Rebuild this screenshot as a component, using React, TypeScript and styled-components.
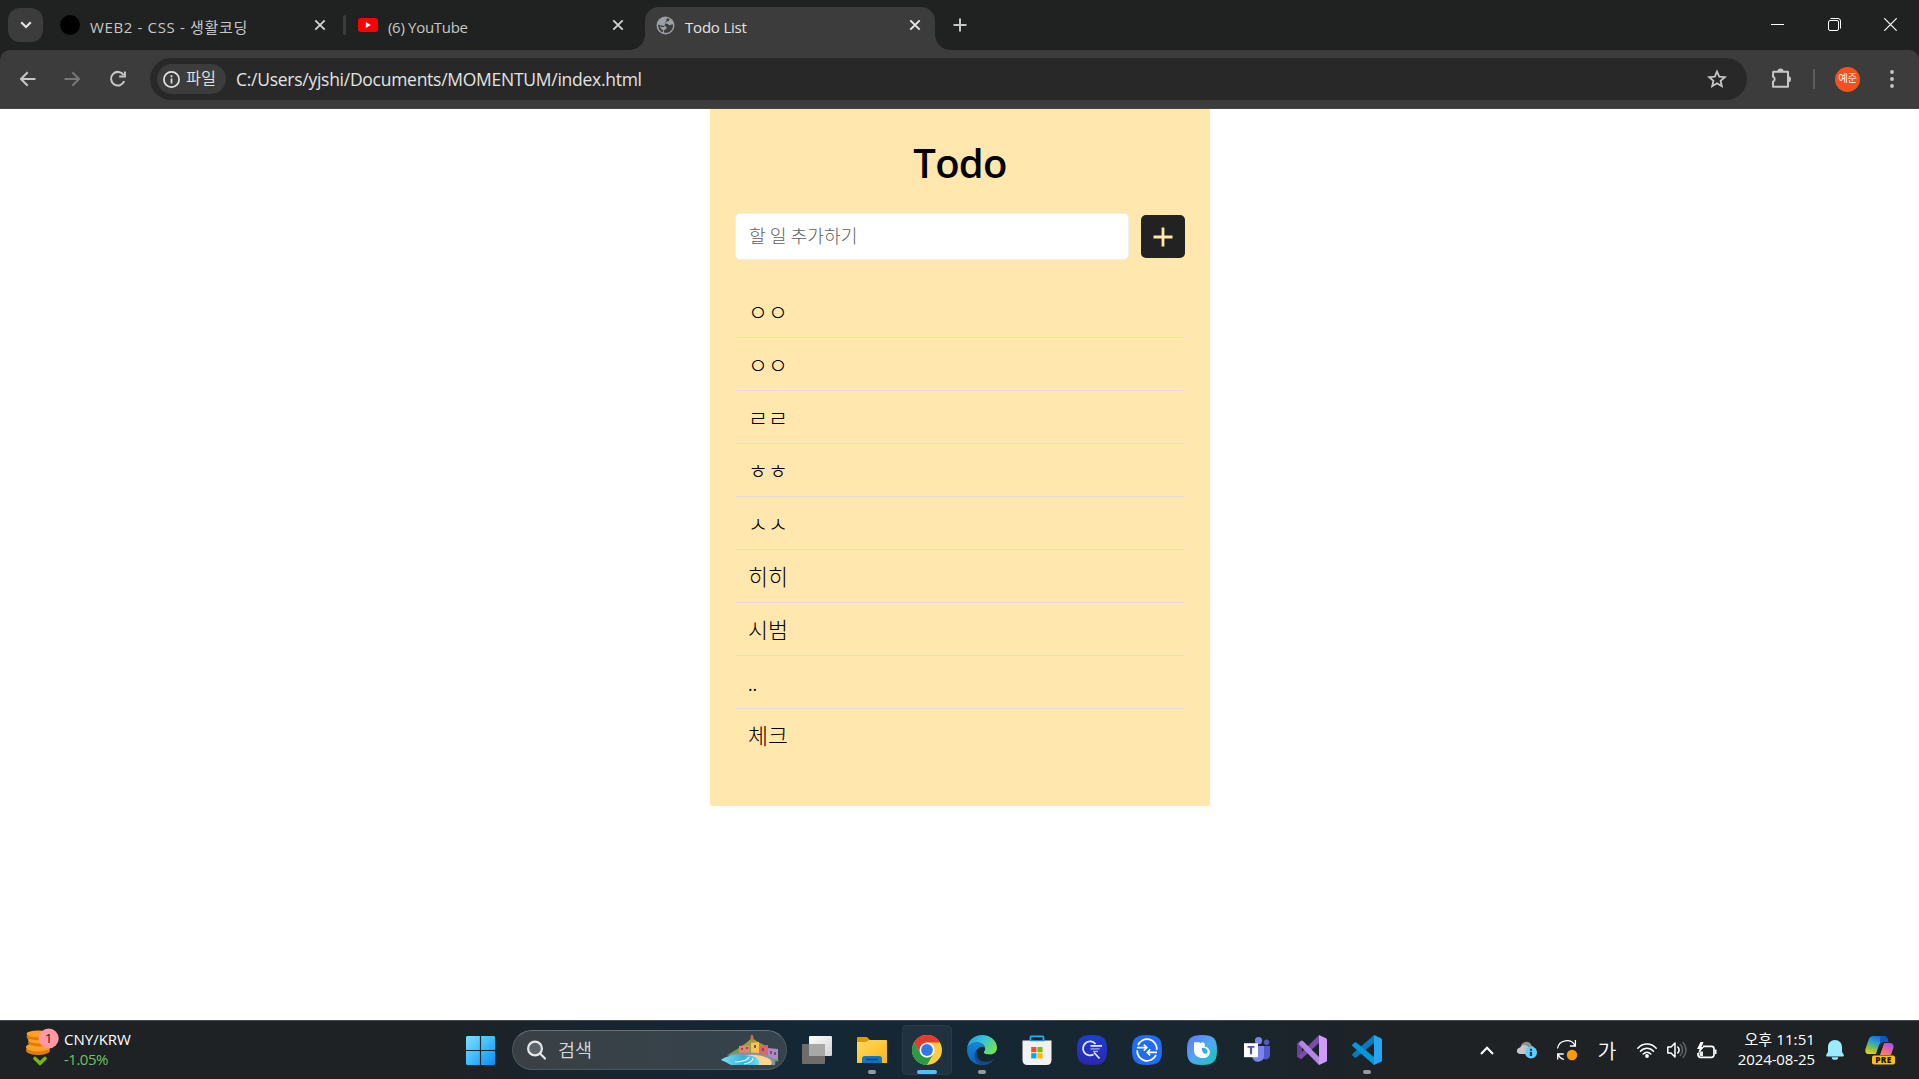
import React from "react";
import styled, { createGlobalStyle } from "styled-components";

const UI_FONT = `"Open Sans", "Noto Sans CJK KR", sans-serif`;
const KR_FONT = `"Noto Sans CJK KR", "Noto Sans", sans-serif`;

const GlobalStyle = createGlobalStyle`
  * { box-sizing: border-box; }
  body { margin: 0; background: #fff; font-family: ${UI_FONT}; overflow: hidden; }
  svg { display: block; flex: none; }
  button, input { font-family: inherit; border: 0; padding: 0; margin: 0; background: none; color: inherit; }
`;

const Screen = styled.div`
  width: 1919px;
  height: 1079px;
  display: flex;
  flex-direction: column;
  background: #fff;
`;

/* Sized, spaced piece of text; $lift raises it inside a centred row */
const Label = styled.span<{ $size: number; $track?: number; $color?: string; $drop?: number; $lift?: number; $kr?: boolean }>`
  font-family: ${(p) => (p.$kr ? KR_FONT : UI_FONT)};
  font-size: ${(p) => p.$size}px;
  font-weight: ${(p) => (p.$kr ? 350 : 400)};
  line-height: 22px;
  letter-spacing: ${(p) => p.$track ?? 0}px;
  color: ${(p) => p.$color ?? "#fff"};
  padding-top: ${(p) => p.$drop ?? 0}px;
  padding-bottom: ${(p) => p.$lift ?? 0}px;
  white-space: pre;
`;

/* ---------- Browser: tab strip ---------- */
const TabStrip = styled.div`
  height: 50px;
  flex: none;
  display: flex;
  background: #202221;
  padding-left: 8px;
`;

const TabSearch = styled.button`
  width: 35px;
  height: 34px;
  margin: 8px 5px 0 0;
  border-radius: 12px;
  background: #3c3c3c;
  display: grid;
  place-items: center;
`;

const Tab = styled.div<{ $width: number; $end: number; $active?: boolean }>`
  position: relative;
  width: ${(p) => p.$width}px;
  height: ${(p) => (p.$active ? 43 : 36)}px;
  margin-top: 7px;
  padding: 0 ${(p) => p.$end}px ${(p) => (p.$active ? 7 : 0)}px ${(p) => (p.$active ? 11 : 12)}px;
  display: flex;
  align-items: center;
  border-radius: 14px 14px 0 0;
  background: ${(p) => (p.$active ? "#3c3c3c" : "transparent")};
  &::before, &::after {
    content: "";
    display: ${(p) => (p.$active ? "block" : "none")};
    position: absolute;
    bottom: 0;
    width: 15px;
    height: 15px;
  }
  &::before { right: 100%; background: radial-gradient(circle at 0 0, transparent 14.5px, #3c3c3c 15px); }
  &::after { left: 100%; background: radial-gradient(circle at 100% 0, transparent 14.5px, #3c3c3c 15px); }
`;

const TabTitle = styled(Label)`
  flex: 1;
  margin-left: 10px;
`;

const TabDivider = styled.div`
  width: 3px;
  height: 20px;
  margin-top: 15px;
  border-radius: 2px;
  background: #3c3c3c;
`;

const BlackDot = styled.div`
  width: 20px;
  height: 20px;
  border-radius: 50%;
  background: #000;
`;

const NewTab = styled.button`
  width: 50px;
  height: 50px;
  display: grid;
  place-items: center;
`;

const WindowControls = styled.div`
  margin-left: auto;
  display: grid;
  grid-template-columns: 57px 56px 57px;
  height: 49px;
  place-items: center;
`;

/* ---------- Browser: toolbar ---------- */
const ToolbarBack = styled.div`
  background: #202221;
  flex: none;
`;

const Toolbar = styled.div`
  height: 59px;
  border-radius: 10px 10px 0 0;
  background: #3c3c3c;
  border-bottom: 1px solid #454545;
  display: flex;
  align-items: center;
  padding: 0 0 0 6px;
`;

const NavButton = styled.button<{ $width: number; $gap?: number }>`
  width: ${(p) => p.$width}px;
  height: 44px;
  margin-right: ${(p) => p.$gap ?? 0}px;
  display: grid;
  place-items: center;
`;

const AddressBar = styled.div`
  width: 1597px;
  height: 42px;
  border-radius: 21px;
  background: #282828;
  display: flex;
  align-items: center;
  padding: 0 20px 0 7px;
`;

const FileChip = styled.div`
  width: 69px;
  height: 30px;
  border-radius: 15px;
  background: #3c3c3c;
  display: flex;
  align-items: center;
  gap: 6px;
  padding-left: 6px;
  margin-right: 10px;
`;

const Grow = styled.div`
  flex: 1;
`;

const ToolDivider = styled.div`
  width: 2px;
  height: 20px;
  background: #5c5c5c;
`;

const Avatar = styled.div`
  width: 25px;
  height: 25px;
  margin: 0 19px 0 20px;
  border-radius: 50%;
  background: #f4511e;
  display: grid;
  place-items: center;
`;

/* ---------- Todo page ---------- */
const Page = styled.main`
  flex: 1;
  display: flex;
  align-items: flex-start;
  padding-left: 710px;
`;

const TodoCard = styled.section`
  width: 500px;
  height: 697px;
  padding: 0 25px;
  background: #ffe7ae;
  border-radius: 0 0 2px 2px;
`;

const Title = styled.h1`
  margin: 0;
  padding-top: 27px;
  height: 104px;
  font: 600 40px/54px ${UI_FONT};
  letter-spacing: -0.7px;
  text-align: center;
  color: #000;
`;

const Form = styled.div`
  display: flex;
  justify-content: space-between;
  align-items: center;
  height: 47px;
  margin-bottom: 25px;
`;

const TodoInput = styled.input`
  width: 394px;
  height: 47px;
  padding: 0 13px 4px;
  border: 1px solid #eee;
  border-radius: 5px;
  background: #fff;
  font: 300 18.2px ${KR_FONT};
  &::placeholder { color: #606060; opacity: 1; }
`;

const AddButton = styled.button`
  width: 44px;
  height: 43px;
  border-radius: 5px;
  background: #222;
  display: grid;
  place-items: center;
`;

const TodoList = styled.ul`
  list-style: none;
  margin: 0;
  padding: 0;
`;

const TodoItem = styled.li<{ $latin?: boolean }>`
  height: 53px;
  padding: 0 13px;
  border-bottom: 1px solid #ddd;
  font: 300 21.7px/51px ${KR_FONT};
  ${(p) => p.$latin && `font: 400 17.5px/56px ${UI_FONT};`}
  color: #000;
  &:last-child { border-bottom: 0; }
`;

/* ---------- Taskbar ---------- */
const Taskbar = styled.footer`
  height: 59px;
  flex: none;
  display: flex;
  border-top: 1px solid #41494c;
  background: linear-gradient(90deg, #1e2225 0, #1e2225 430px, #172530 620px, #142734 800px, #152733 1020px, #19262e 1220px, #1e2225 1400px, #1e2225 100%);
`;

const Widget = styled.div`
  width: 449px;
  display: flex;
  padding-left: 25px;
`;

const WidgetText = styled.div`
  display: flex;
  flex-direction: column;
  padding: 8px 0 0 3px;
  & > span { line-height: 20px; }
`;

const StartButton = styled.button`
  width: 63px;
  height: 58px;
  display: grid;
  place-items: center;
`;

const SearchBox = styled.div`
  width: 275px;
  height: 40px;
  margin: 9px 2px 0 0;
  border: 1px solid #4c5860;
  border-top-color: #66727a;
  border-radius: 20px;
  background: linear-gradient(90deg, #3a4045, #34434d);
  display: flex;
  align-items: center;
  padding: 0 6px 0 14px;
`;

const SearchHint = styled(Label)`
  margin-left: 12px;
`;

const Apps = styled.div`
  display: flex;
`;

const AppSlot = styled.div`
  width: 55px;
  display: flex;
  flex-direction: column;
  align-items: center;
  padding-top: 4px;
`;

const AppTile = styled.div<{ $active?: boolean }>`
  width: 50px;
  height: 50px;
  flex: none;
  border-radius: 5px;
  display: grid;
  place-items: center;
  background: ${(p) => (p.$active ? "#20323f" : "transparent")};
  box-shadow: ${(p) => (p.$active ? "inset 0 0 0 1px #2a3b47" : "none")};
`;

const RunMark = styled.div<{ $active?: boolean }>`
  width: ${(p) => (p.$active ? 20 : 8)}px;
  height: 4px;
  margin-top: -5px;
  border-radius: 2px;
  background: ${(p) => (p.$active ? "#4cc2ff" : "#969ba0")};
`;

const Tray = styled.div`
  margin-left: auto;
  display: flex;
  height: 58px;
  align-items: center;
`;

const TrayCell = styled.div<{ $width: number; $end?: number }>`
  width: ${(p) => p.$width}px;
  padding-right: ${(p) => p.$end ?? 0}px;
  display: grid;
  place-items: center;
`;

const Clock = styled.div`
  width: 88px;
  display: flex;
  flex-direction: column;
  align-items: flex-end;
  padding-bottom: 2px;
  & > span { line-height: 20px; }
`;

/* ---------- Icons ---------- */
const CloseIcon = ({ color = "#d0d0d0" }: { color?: string }) => (
  <svg width="12" height="12" viewBox="0 0 12 12" stroke={color} strokeWidth="1.9">
    <path d="M1.3 1.3l9.4 9.4M10.7 1.3l-9.4 9.4" />
  </svg>
);

const Globe = () => (
  <svg width="19" height="19" viewBox="0 0 19 19">
    <circle cx="9.5" cy="9.5" r="9" fill="#9aa0a6" />
    <path d="M11 2.2c1 .1 2 .4 2.600.8-.2 1.300-.6 2-1.900 2.200-1.500.2-2.700.4-2.700 1.600 0 .9 1 .9 2 .9 1.400 0 1.500 1.500 2.600 1.500 1 0 1.800-.8 3.400-.6.3 3.500-1.300 6-3.500 7.300-2 1.100-4 1.100-5.500.6v-2c0-1.200 2.600-.8 2.600-2.600 0-1.600-1.300-2-2.800-2C6.200 9.900 5 9.500 2.100 8.500 2 12 3.500 15 6.500 16.400l.8-1.900C5.500 13.500 4.300 12 3.800 10.200c1.500.6 2.700.9 4.200.9" fill="#3c3c3c" />
  </svg>
);

const YouTube = () => (
  <svg width="20" height="14" viewBox="0 0 20 14">
    <rect width="20" height="14" rx="3.2" fill="#f00" />
    <path d="M7.8 4v6l5-3z" fill="#fff" />
  </svg>
);

const Reload = () => (
  <svg width="18" height="18" viewBox="0 0 18 18" fill="none" stroke="#c7c7c7" strokeWidth="2">
    <path d="M15.2 11.2A6.8 6.8 0 1 1 14.6 5" />
    <path d="M15.9 1.5V6.6H10.2" />
  </svg>
);

const Arrow = ({ color, flip }: { color: string; flip?: boolean }) => (
  <svg width="16" height="16" viewBox="0 0 16 16" fill="none" stroke={color} strokeWidth="2">
    <path d={flip ? "M.5 8H14.5M8.3 1.2L15 8l-6.7 6.8" : "M15.5 8H1.5M7.7 1.2L1 8l6.7 6.8"} />
  </svg>
);

const Coins = () => (
  <svg width="36" height="46" viewBox="0 0 36 46">
    <g transform="translate(0 3)">
      <rect x="1.500" y="22" width="23" height="5" fill="#b85c05" />
      <rect x="4" y="16" width="22" height="4" fill="#b85c05" />
      <rect x="2" y="11" width="22" height="4" fill="#b85c05" />
      <ellipse cx="13" cy="26.5" rx="12" ry="4.6" fill="#e07c0a" />
      <ellipse cx="13" cy="23" rx="12" ry="4.4" fill="#ffa024" />
      <ellipse cx="15" cy="18.5" rx="12" ry="4" fill="#e07c0a" />
      <ellipse cx="15" cy="16" rx="12" ry="3.6" fill="#ffa024" />
      <ellipse cx="13" cy="12.5" rx="11.5" ry="3.8" fill="#e07c0a" />
      <ellipse cx="13" cy="9.8" rx="11.5" ry="3.4" fill="#ffa024" />
    </g>
    <path d="M10 37.5l5 4.8 5-4.8" fill="none" stroke="#74b816" strokeWidth="3.6" strokeLinecap="round" />
    <circle cx="23.7" cy="17.5" r="10" fill="#ff99a4" />
    <text x="23.7" y="22.3" textAnchor="middle" fontFamily="Open Sans" fontSize="13.5" fill="#2a1a1c">1</text>
  </svg>
);

const Windows = () => (
  <svg width="29" height="29" viewBox="0 0 29 29">
    <defs>
      <linearGradient id="win" x1="0" y1="0" x2="29" y2="29" gradientUnits="userSpaceOnUse">
        <stop stopColor="#84dcff" /><stop offset=".5" stopColor="#3fbcfc" /><stop offset="1" stopColor="#0d8df3" />
      </linearGradient>
    </defs>
    <path fill="url(#win)" d="M1 0h12.9v13.9H0V1zM15.1 0H28l1 1v12.9H15.1zM0 15.1h13.9V29H1l-1-1zM15.1 15.1H29V28l-1 1H15.1z" />
  </svg>
);

const Village = () => (
  <svg width="59" height="32" viewBox="0 0 59 32">
    <defs>
      <linearGradient id="sea" x1="0" x2="1"><stop stopColor="#7be0f5" /><stop offset=".6" stopColor="#2fb4dd" /><stop offset="1" stopColor="#71dcf0" /></linearGradient>
      <linearGradient id="hill" x1="0" y1="0" x2="0" y2="1"><stop stopColor="#a8a53a" /><stop offset="1" stopColor="#4c9c3e" /></linearGradient>
    </defs>
    <path d="M8 20L18 14 25 9 31 4 37 8 45 12 53 20 58 27 50 29z" fill="url(#hill)" />
    <path d="M31 0l1.500 3v4h-3V3z" fill="#c27650" />
    <path d="M18 12l11-1v9H18z" fill="#ed8068" />
    <path d="M30 9l8-1v12h-8z" fill="#fbc254" />
    <path d="M39 12l8-1v11h-8z" fill="#e0626b" />
    <path d="M47 14l10 1v11l-10-2z" fill="#a88bc9" />
    <path d="M20 14h2v2h-2zM25 13h2v2h-2zM33 11h2v3h-2zM41 14h2v3h-2zM49 17h2v3h-2zM53 18h2v3h-2z" fill="#844d61" />
    <path d="M6 21C18 17 35 18 46 21c6 2 9 6 8 10H30z" fill="#8990a0" />
    <path d="M12 23c12-3 24-3 32 0 6 2 8 5 6 8H20z" fill="#ffd58b" />
    <path d="M0 26c5-4 13-6 22-5 12 0 18 4 16 10H10C6 29 5 28 0 26z" fill="url(#sea)" />
    <path d="M14 28c7 0 13-2 14-5M23 30c6-1 9-3 9-6" stroke="#d8f8ff" fill="none" strokeWidth="1.2" />
  </svg>
);

const TaskView = () => (
  <svg width="30" height="28" viewBox="0 0 30 28">
    <defs><linearGradient id="tv" x1="0" y1="0" x2="1" y2="1"><stop stopColor="#fff" /><stop offset="1" stopColor="#d2d2d2" /></linearGradient></defs>
    <rect y="8" width="23" height="20" rx="1" fill="#6e6d6c" />
    <rect x="7" width="23" height="20" rx="1" fill="url(#tv)" />
    <path d="M7 8h16v12H7z" fill="#a8a8a8" />
  </svg>
);

const Folder = () => (
  <svg width="30" height="28" viewBox="0 0 30 28">
    <defs><linearGradient id="fold" x1="0" y1="0" x2="1" y2="1"><stop stopColor="#ffd864" /><stop offset="1" stopColor="#fbb812" /></linearGradient></defs>
    <path d="M0 2Q0 1 1 1h9l3 3h10v6H0z" fill="#dd9a08" />
    <path d="M0 6h9l3-2h17q1 0 1 1v22H0z" fill="url(#fold)" />
    <path d="M5 27v-4q0-3 3-3h14q3 0 3 3v4z" fill="#0f75c4" />
    <path d="M9 23.5h12" stroke="#084c88" strokeWidth="1.6" />
  </svg>
);

const Chrome = () => (
  <svg width="30" height="30" viewBox="0 0 30 30">
    <circle cx="15" cy="15" r="15" fill="#ffcd40" />
    <path d="M2 7.5A15 15 0 0 1 28 7.5H15L8.5 18.8z" fill="#e33b2e" />
    <path d="M2 7.5l6.5 11.3A7.5 7.5 0 0 0 21.5 18.8L15 30A15 15 0 0 1 2 7.5z" fill="#2a9a48" />
    <circle cx="15" cy="15" r="7.5" fill="#fff" />
    <circle cx="15" cy="15" r="5.9" fill="#3079ed" />
  </svg>
);

const Edge = () => (
  <svg width="30" height="30" viewBox="0 0 30 30">
    <defs>
      <linearGradient id="edgeA" x1="0" y1="0" x2="1" y2=".5"><stop stopColor="#2497d8" /><stop offset=".5" stopColor="#34c1df" /><stop offset="1" stopColor="#71e15a" /></linearGradient>
      <linearGradient id="edgeB" x1="0" y1="0" x2="0" y2="1"><stop stopColor="#1486d8" /><stop offset="1" stopColor="#0c64bb" /></linearGradient>
    </defs>
    <path d="M.2 13C1 5.500 7 0 15 0c8.500 0 15 6 15 12.600 0 4.400-3.200 7-7.600 7-3.400 0-5.700-1-5.700-2.400 0-.8 1.300-1.300 1.300-3.600 0-3.400-3.300-6-8-6C5.500 7.600 2 9.500.2 13z" fill="url(#edgeA)" />
    <path d="M.1 14C1 10 5 7.500 10 7.600c4.500 0 8 2.700 8 6-.5-1-1.500-1.700-3-1.700-4 0-6.500 4-5.500 8.500 1 4.600 4.500 8 9 9C8 32 0 24.500 0 15z" fill="url(#edgeB)" />
    <path d="M11.500 13.500c-3 2.500-2.500 7.500.5 10.700 4 3.800 10 3.500 15.300-.8C24 28.500 19 31 14 29.600 8 27.500 6 21 8.500 16.500c.8-1.500 1.800-2.400 3-3z" fill="#124b86" />
    <path d="M15.200 11.800c1.500 0 2.600.6 2.900 1.500.3 2.400-1.400 3-1.400 3.900 0 1.700 3 2.700 6.700 2.300-4 2.200-11 1.500-11.500-3.500-.2-2.400 1.300-4.200 3.300-4.200z" fill="#142734" />
  </svg>
);

const Store = () => (
  <svg width="30" height="30" viewBox="0 0 30 30">
    <path d="M8.500 6V2.200q0-.9.900-.9h11.200q.9 0 .9.900V6" fill="none" stroke="#22b0ee" strokeWidth="1.800" />
    <path d="M.5 5.500h29V25q0 5-5 5h-19q-5 0-5-5z" fill="#f2f2f2" />
    <path d="M7.600 5h15v1.200H7.600z" fill="#1a91d6" />
    <path d="M9.200 12h5.200v5.200H9.200z" fill="#f25022" /><path d="M15.400 12h5.200v5.200h-5.200z" fill="#7fba00" />
    <path d="M9.200 18.200h5.200v5.200H9.200z" fill="#00a4ef" /><path d="M15.400 18.200h5.200v5.200h-5.200z" fill="#ffb900" />
  </svg>
);

const SQUIRCLE = "M15 0C26.500 0 30 3.500 30 15S26.500 30 15 30 0 26.500 0 15 3.500 0 15 0z";

const QuickSearch = () => (
  <svg width="30" height="30" viewBox="0 0 30 30" fill="none" stroke="#e8ecff" strokeWidth="1.800">
    <defs><linearGradient id="qs" x1="0" y1="0" x2="0" y2="1"><stop stopColor="#1e3fcc" /><stop offset="1" stopColor="#2b27ae" /></linearGradient></defs>
    <path d={SQUIRCLE} fill="url(#qs)" stroke="none" />
    <path d="M18.500 9A7 7 0 1 0 16.500 19.500" />
    <path d="M17 17.500L22.500 23.500M13.500 10.800H25" />
    <path d="M13.500 13.800h9M16 16.500h5" stroke="#9bb0ff" strokeWidth="1.300" />
  </svg>
);

const Link = () => (
  <svg width="30" height="30" viewBox="0 0 30 30" fill="none" stroke="#fff" strokeWidth="1.800">
    <path d={SQUIRCLE} fill="#226cf5" stroke="none" />
    <path d="M6 10.200A9.800 9.800 0 0 1 24.800 14.800M24 19.800A9.800 9.800 0 0 1 5.200 15.200" />
    <path d="M5 12.600h9.500M11.800 9.500l3 3.100-3 3.100M25 17.400h-9.500M18.200 14.300l-3 3.100 3 3.100" strokeWidth="1.600" />
  </svg>
);

const Bixby = () => (
  <svg width="30" height="30" viewBox="0 0 30 30">
    <defs><linearGradient id="bx" x1="0" y1="0" x2="1" y2="1"><stop stopColor="#6176f5" /><stop offset=".5" stopColor="#50a8ef" /><stop offset="1" stopColor="#0dcbb8" /></linearGradient></defs>
    <path d={SQUIRCLE} fill="url(#bx)" />
    <path d="M7 7.200h4.500q2.700 0 2.700 2.800v8.500c0 1.500.5 3 1.800 4.300C10.500 23.200 7 20 7 15z" fill="#fff" />
    <path d="M14.500 7.400q3.300-.5 3.300 2.800v1.600c3 .2 5 2.500 5 5.400 0 3.400-2.600 5.700-5.800 5.700-3 0-5-2-5-5V10z" fill="#fff" />
    <path d="M14.700 13.200c3.200-.6 6.500.8 5.800 4.100-1.200 3.200-5.800 1-5.800-4.100z" fill="#31afd5" />
  </svg>
);

const Teams = () => (
  <svg width="30" height="28" viewBox="0 0 30 28">
    <circle cx="16.500" cy="4.700" r="3.600" fill="#7b83eb" /><circle cx="24.600" cy="6.300" r="2.700" fill="#5059c9" />
    <path d="M19 10h9v9a4.500 4.500 0 0 1-8.500 2z" fill="#5059c9" />
    <path d="M10 10h12v9a6 6 0 0 1-11.500 3z" fill="#7b83eb" />
    <path d="M2 7.200h14v14H2z" fill="#fff" />
    <path d="M5.500 9.900h7v1.900h-2.400v6.500H7.900v-6.500H5.500z" fill="#4b53bc" />
  </svg>
);

const VisualStudio = () => (
  <svg width="30" height="30" viewBox="0 0 30 30">
    <path d="M0 8l4-2.200 1 4V20l-1 4.200L0 22z" fill="#6a3f96" />
    <path d="M22 0v8L5 23.500l-1 .7L1 21z" fill="#7a4ba8" />
    <path d="M4 5.800q1-.5 2 .3L22 22v8L1.500 9z" fill="#b486e4" />
    <path d="M22 0l7 3.300q1 .5 1 1.500v20.400q0 1-1 1.500L22 30z" fill="#cf9bfb" />
  </svg>
);

const VSCode = () => (
  <svg width="30" height="30" viewBox="0 0 30 30">
    <path d="M22 0v8L4.300 22.500q-.9.700-1.700 0L.6 20.700q-1-1 0-2z" fill="#0879be" />
    <path d="M22 30v-8L4.300 7.500q-.9-.7-1.700 0L.6 9.300q-1 1 0 2z" fill="#0795dc" />
    <path d="M22 0l7 3.300q1 .5 1 1.500v20.400q0 1-1 1.500L22 30z" fill="#28a5f2" />
  </svg>
);

const Cloud = () => (
  <svg width="22" height="20" viewBox="0 0 22 20">
    <path d="M5 6C6 1 14 0 15.500 5.500 19 6 19 11 16 12H7z" fill="#8f9294" />
    <path d="M4.500 14C-.5 14 0 8 4 7.500 7 3.500 12 5 12.500 8.500L15 14z" fill="#c4c6c7" />
    <circle cx="15" cy="12.500" r="6" fill="#60cdff" />
    <path d="M14 8.800h2v2h-2zM13.800 11.800h2.300v4.300h-2.300z" fill="#12394c" />
  </svg>
);

const Sync = () => (
  <svg width="22" height="22" viewBox="0 0 22 22" fill="none" stroke="#fff" strokeWidth="1.300">
    <path d="M1.500 9.500C3 .5 15 -1 19 6.500M19.400 1v6h-5.500M8 20.500C5 19.500 3 18 2.500 15.500M1.700 20.500v-5.500h6" />
    <circle cx="16" cy="16" r="5.200" fill="#ff9a0a" stroke="none" />
  </svg>
);

const Wifi = () => (
  <svg width="20" height="15" viewBox="0 0 20 15" fill="none" stroke="#fff" strokeWidth="1.500" strokeLinecap="round">
    <path d="M.8 5.300C6-.3 14-.3 19.200 5.300M3.500 8.200c3.700-4 9.300-4 13 0M6.200 11c2.200-2.400 5.400-2.400 7.600 0" />
    <circle cx="10" cy="13" r="1.900" fill="#fff" stroke="none" />
  </svg>
);

const Speaker = () => (
  <svg width="20" height="18" viewBox="0 0 20 18" fill="none" strokeWidth="1.500" strokeLinecap="round" strokeLinejoin="round">
    <path d="M.8 6H4l4-4v14l-4-4H.8zM10.800 6c1.500 1.700 1.500 4.300 0 6" stroke="#fff" />
    <path d="M13.300 3.500c3 3 3 8 0 11M16 1.500c4 4.500 4 10.500 0 15" stroke="#60656a" />
  </svg>
);

const Battery = () => (
  <svg width="20" height="17" viewBox="0 0 20 17">
    <path d="M6 4.300h8.500a2.500 2.500 0 0 1 2.500 2.500v6a2.500 2.500 0 0 1-2.500 2.500h-11A2.500 2.500 0 0 1 1 12.800V11" fill="none" stroke="#fff" strokeWidth="1.700" />
    <path d="M18 7.500h1.500v4.500H18z" fill="#fff" />
    <path d="M3.500 0L0 7h2.500L1 12l6-7H4.500L6.500 0z" fill="#fff" />
    <path d="M2.500 9.500h3.500v4.500H2.500z" fill="#e8e8e8" />
  </svg>
);

const Bell = () => (
  <svg width="18" height="20" viewBox="0 0 18 20" fill="#99ebff">
    <path d="M9 0c4.200 0 7 3 7 7v4.800l1.800 3.300q.3 1.400-1 1.400H1.200q-1.300 0-1-1.400L2 11.800V7c0-4 2.800-7 7-7z" />
    <path d="M5.800 17.200h6.400a3.200 2.600 0 0 1-6.400 0z" />
  </svg>
);

const Copilot = () => (
  <svg width="30" height="30" viewBox="0 0 30 30">
    <defs>
      <linearGradient id="cpA" x1=".7" y1="0" x2=".2" y2="1"><stop stopColor="#1a5fdc" /><stop offset=".4" stopColor="#24a2d4" /><stop offset=".75" stopColor="#8fc440" /><stop offset="1" stopColor="#f1cb27" /></linearGradient>
      <linearGradient id="cpB" x1=".8" y1="0" x2=".2" y2="1"><stop stopColor="#a052ea" /><stop offset=".5" stopColor="#e35fa6" /><stop offset="1" stopColor="#f88962" /></linearGradient>
    </defs>
    <path d="M15 1h4q2.600 0 3.400 2.600L23.500 7h-5q-3 0-4 3l-3 9H4q-4.500 0-3.500-5L3.500 5Q4.700 1 8.500 1z" fill="url(#cpA)" />
    <path d="M15.500 1h3.500q2.600 0 3.400 2.600L23.500 7h-5q-2.500 0-3.500 2z" fill="#1754b7" />
    <path d="M19 8h6q4 0 3.500 4.500L26 20H15z" fill="url(#cpB)" />
    <path d="M19 8l-4 11h-4l3-9q1-2 3-2z" fill="#1e2225" />
    <rect x="7" y="20.500" width="23" height="9" rx="2" fill="#ffc20a" />
    <text x="18.500" y="28" textAnchor="middle" fontFamily="Open Sans" fontWeight="800" fontSize="8.300" letterSpacing=".4" fill="#1a1400">PRE</text>
  </svg>
);

const todos = ["ㅇㅇ", "ㅇㅇ", "ㄹㄹ", "ㅎㅎ", "ㅅㅅ", "히히", "시범", "..", "체크"];

type AppEntry = { name: string; icon: React.ReactNode; running?: boolean; active?: boolean };
const apps: AppEntry[] = [
  { name: "taskview", icon: <TaskView /> },
  { name: "explorer", icon: <Folder />, running: true },
  { name: "chrome", icon: <Chrome />, running: true, active: true },
  { name: "edge", icon: <Edge />, running: true },
  { name: "store", icon: <Store /> },
  { name: "quicksearch", icon: <QuickSearch /> },
  { name: "link", icon: <Link /> },
  { name: "bixby", icon: <Bixby /> },
  { name: "teams", icon: <Teams /> },
  { name: "visualstudio", icon: <VisualStudio /> },
  { name: "vscode", icon: <VSCode />, running: true },
];

export default function App() {
  return (
    <Screen>
      <GlobalStyle />
      <TabStrip>
        <TabSearch>
          <svg width="12" height="8" viewBox="0 0 12 8" fill="none" stroke="#e3e3e3" strokeWidth="2.200"><path d="M1.200 1.200L6 6l4.800-4.800" /></svg>
        </TabSearch>
        <Tab $width={295} $end={17}>
          <BlackDot />
          <TabTitle $size={15} $track={0.65} $color="#c7c7c7" $drop={4}>WEB2 - CSS - 생활코딩</TabTitle>
          <CloseIcon />
        </Tab>
        <TabDivider />
        <Tab $width={299} $end={21}>
          <YouTube />
          <TabTitle $size={15} $track={-0.3} $color="#c7c7c7" $drop={4}>(6) YouTube</TabTitle>
          <CloseIcon />
        </Tab>
        <Tab $width={290} $end={14} $active>
          <Globe />
          <TabTitle $size={15} $track={-0.2} $color="#e3e3e3" $drop={4}>Todo List</TabTitle>
          <CloseIcon color="#e8e8e8" />
        </Tab>
        <NewTab>
          <svg width="14" height="14" viewBox="0 0 14 14" stroke="#c7c7c7" strokeWidth="2"><path d="M7 .5v13M.5 7h13" /></svg>
        </NewTab>
        <WindowControls>
          <svg width="13" height="13" viewBox="0 0 13 13"><path d="M0 6h13v1H0z" fill="#fff" /></svg>
          <svg width="13" height="13" viewBox="0 0 13 13" fill="none" stroke="#fff">
            <rect x=".5" y="2.500" width="10" height="10" rx="1.500" /><path d="M2.500 .5h7.500a2.500 2.500 0 0 1 2.500 2.500v7.500" />
          </svg>
          <svg width="13" height="13" viewBox="0 0 13 13" stroke="#fff" strokeWidth="1.200"><path d="M.3.3l12.400 12.400M12.700.3L.3 12.700" /></svg>
        </WindowControls>
      </TabStrip>

      <ToolbarBack>
        <Toolbar>
          <NavButton $width={44}><Arrow color="#c7c7c7" /></NavButton>
          <NavButton $width={44}><Arrow color="#777" flip /></NavButton>
          <NavButton $width={48} $gap={8}><Reload /></NavButton>
          <AddressBar>
            <FileChip>
              <svg width="17" height="17" viewBox="0 0 17 17" fill="none" stroke="#e3e3e3" strokeWidth="1.700">
                <circle cx="8.500" cy="8.500" r="7.600" /><path d="M8.500 7.500v5M8.500 4.300v1.900" />
              </svg>
              <Label $size={16.3} $color="#e3e3e3" $lift={4} $kr>파일</Label>
            </FileChip>
            <Label $size={17.5} $color="#e3e3e3" $lift={1} $track={-0.27}>C:/Users/yjshi/Documents/MOMENTUM/index.html</Label>
            <Grow />
            <svg width="20" height="20" viewBox="0 0 20 20" fill="none" stroke="#c7c7c7" strokeWidth="1.800">
              <path d="M10 2.500l2.200 5.100 5.600.5-4.200 3.700 1.200 5.400-4.800-2.900-4.800 2.900 1.200-5.400L2.200 8.100l5.600-.5z" />
            </svg>
          </AddressBar>
          <NavButton $width={66}>
            <svg width="22" height="22" viewBox="0 0 22 22">
              <path d="M4.200 3.800H19v15H4v-5a2.700 2.700 0 0 0 0-5z" fill="none" stroke="#c7c7c7" strokeWidth="2" strokeLinejoin="round" />
              <path d="M8.500 3.200a3 2.800 0 0 1 6 0zM19.500 8.200a2.500 3 0 0 1 0 6z" fill="#c7c7c7" />
            </svg>
          </NavButton>
          <ToolDivider />
          <Avatar><Label $size={10.5} $track={-0.3} $lift={2} $kr>예준</Label></Avatar>
          <NavButton $width={26}>
            <svg width="4" height="18" viewBox="0 0 4 18" fill="#c7c7c7"><circle cx="2" cy="2" r="1.900" /><circle cx="2" cy="9" r="1.900" /><circle cx="2" cy="16" r="1.900" /></svg>
          </NavButton>
        </Toolbar>
      </ToolbarBack>

      <Page>
        <TodoCard>
          <Title>Todo</Title>
          <Form>
            <TodoInput placeholder="할 일 추가하기" />
            <AddButton>
              <svg width="20" height="20" viewBox="0 0 20 20" fill="#ffe7ae"><path d="M8.600 .5h2.800v8.100h8.100v2.800h-8.100v8.100H8.600v-8.100H.5V8.600h8.100z" /></svg>
            </AddButton>
          </Form>
          <TodoList>
            {todos.map((t, i) => <TodoItem key={i} $latin={t === ".."}>{t}</TodoItem>)}
          </TodoList>
        </TodoCard>
      </Page>

      <Taskbar>
        <Widget>
          <Coins />
          <WidgetText>
            <Label $size={15}>CNY/KRW</Label>
            <Label $size={15} $track={-0.5} $color="#6cc35f">-1.05%</Label>
          </WidgetText>
        </Widget>
        <StartButton><Windows /></StartButton>
        <SearchBox>
          <svg width="19" height="20" viewBox="0 0 19 20" fill="none" stroke="#e4e6e8" strokeWidth="2.200"><circle cx="8" cy="8.500" r="6.900" fill="#5b646b" /><path d="M13 13.500l5 5" strokeLinecap="round" /></svg>
          <SearchHint $size={18.5} $color="#d8dbde" $lift={2} $kr>검색</SearchHint>
          <Grow />
          <Village />
        </SearchBox>
        <Apps>
          {apps.map((a) => (
            <AppSlot key={a.name}>
              <AppTile $active={a.active}>{a.icon}</AppTile>
              {a.running && <RunMark $active={a.active} />}
            </AppSlot>
          ))}
        </Apps>
        <Tray>
          <TrayCell $width={40}>
            <svg width="14" height="9" viewBox="0 0 14 9" fill="none" stroke="#fff" strokeWidth="2"><path d="M1 8l6-6.300L13 8" /></svg>
          </TrayCell>
          <TrayCell $width={40}><Cloud /></TrayCell>
          <TrayCell $width={40}><Sync /></TrayCell>
          <TrayCell $width={40}><Label $size={20.5} $lift={1} $kr>가</Label></TrayCell>
          <TrayCell $width={40}><Wifi /></TrayCell>
          <TrayCell $width={20}><Speaker /></TrayCell>
          <TrayCell $width={40}><Battery /></TrayCell>
          <Clock>
            <Label $size={15} $track={0.1}>오후 11:51</Label>
            <Label $size={15} $track={-0.1}>2024-08-25</Label>
          </Clock>
          <TrayCell $width={40}><Bell /></TrayCell>
          <TrayCell $width={64} $end={14}><Copilot /></TrayCell>
        </Tray>
      </Taskbar>
    </Screen>
  );
}
